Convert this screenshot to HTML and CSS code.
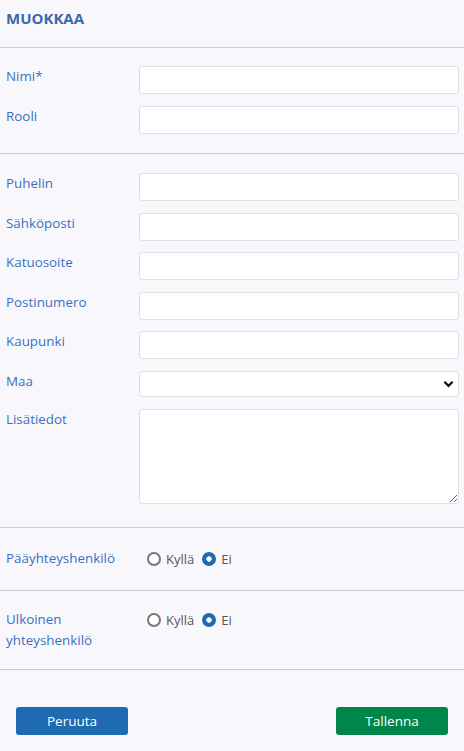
FILE: index.html
```html
<!DOCTYPE html>
<html>
<head lang="fi">
    <meta charset="UTF-8">
    <title>Muokkaa</title>
    <link rel="stylesheet" href="styles.css">
</head>
<body>
<div class="edit">
    <div class="edit-head">MUOKKAA</div>

    <div class="group">
        <div class="row"><label>Nimi*</label><input type="text"></div>
        <div class="row"><label>Rooli</label><input type="text"></div>
    </div>

    <div class="group group-contact">
        <div class="row"><label>Puhelin</label><input type="text"></div>
        <div class="row"><label>Sähköposti</label><input type="text"></div>
        <div class="row"><label>Katuosoite</label><input type="text"></div>
        <div class="row"><label>Postinumero</label><input type="text"></div>
        <div class="row"><label>Kaupunki</label><input type="text"></div>
        <div class="row"><label>Maa</label><select class="select"><option></option></select></div>
        <div class="row"><label>Lisätiedot</label><textarea></textarea></div>
    </div>

    <div class="group group-radio main-contact">
        <div class="row row-radio">
            <label>Pääyhteyshenkilö</label>
            <div class="choices">
                <label class="choice"><input type="radio" name="main">Kyllä</label>
                <label class="choice"><input type="radio" name="main" checked>Ei</label>
            </div>
        </div>
    </div>

    <div class="group group-radio">
        <div class="row row-radio">
            <label>Ulkoinen yhteyshenkilö</label>
            <div class="choices">
                <label class="choice"><input type="radio" name="ext">Kyllä</label>
                <label class="choice"><input type="radio" name="ext" checked>Ei</label>
            </div>
        </div>
    </div>

    <div class="buttons">
        <button class="btn btn-cancel">Peruuta</button>
        <button class="btn btn-save">Tallenna</button>
    </div>
</div>
</body>
</html>
```

FILE: styles.css
```css
* { margin: 0; padding: 0; box-sizing: border-box;}
body {
    background-color: #f8f8fc;
    font-family: "Open Sans", "Liberation Sans", sans-serif;
    font-size: 13px;
    color: #3d6fc0;
}
.edit { width: 464px;}
.edit-head {
    height: 48px;
    padding: 7px 6px 0;
    font-size: 15px;
    font-weight: bold;
    line-height: 22px;
    color: #3a68b0;
    border-bottom: 1px solid #cacacf;
}
.group {
    display: flex;
    flex-direction: column;
    gap: 12px;
    padding: 18px 5px 19px 6px;
    border-bottom: 1px solid #cacacf;
}
.group-contact {
    gap: 11.6px;
    padding-top: 19px;
    padding-bottom: 23px;
}
.row {
    display: grid;
    grid-template-columns: 133px 1fr;
    align-items: start;
}
.row > label {
    font-size: 13.4px;
    line-height: 21px;
}
.row input[type=text], .row textarea, .select {
    height: 28px;
    border: 1px solid #dfdfe2;
    border-radius: 3px;
    background-color: #fff;
    font: inherit;
    padding: 0 6px;
}
.select {
    height: 26px;
    appearance: none;
    -webkit-appearance: none;
    background: #fff url("data:image/svg+xml,%3Csvg xmlns='http://www.w3.org/2000/svg' width='12' height='8' viewBox='0 0 12 8'%3E%3Cpath d='M1.5 1.5l4.5 4.5 4.5-4.5' fill='none' stroke='%23111' stroke-width='2.4'/%3E%3C/svg%3E") no-repeat right 4px center;
    background-size: 11px 8px;
}
.row textarea {
    height: 95px;
    resize: vertical;
}
.group-radio {
    padding-top: 18px;
    padding-bottom: 18px;
}
.main-contact {
    padding-top: 20px;
    padding-bottom: 21px;
}
.row-radio > label {
    padding-right: 20px;
}
.row-radio .choices {
    display: flex;
    gap: 8px;
    padding-left: 8px;
    padding-top: 1px;
    height: 21px;
    align-items: center;
}
.choice {
    display: flex;
    align-items: center;
    color: #555;
    line-height: 20px;
}
.choice input {
    appearance: none;
    -webkit-appearance: none;
    width: 14px;
    height: 14px;
    margin-right: 5px;
    border: 2px solid #777;
    border-radius: 50%;
    background-color: #fff;
}
.choice input:checked {
    border: none;
    background: radial-gradient(circle, #fff 0, #fff 2.4px, #1f6bb3 3px);
}
.buttons {
    display: flex;
    justify-content: space-between;
    padding: 37px 16px 0;
}
.btn {
    width: 112px;
    height: 28px;
    border: none;
    border-radius: 3px;
    color: #fff;
    font: inherit;
    font-size: 13.5px;
}
.btn-cancel { background-color: #1e6bb1;}
.btn-save { background-color: #00864b;}
```
